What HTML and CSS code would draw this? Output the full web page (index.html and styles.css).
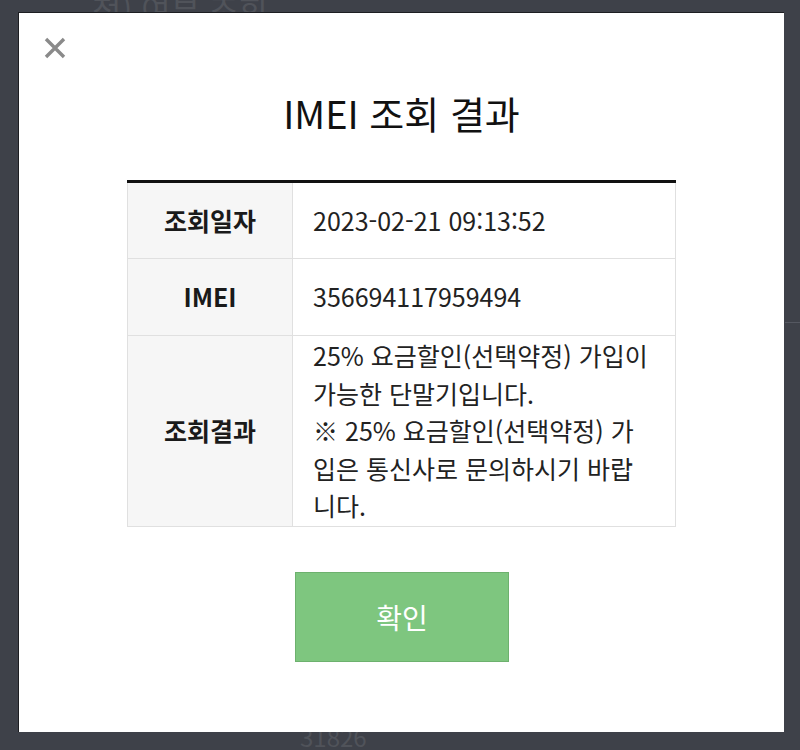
FILE: index.html
```html
<!DOCTYPE html>
<html lang="ko">
<head>
<meta charset="utf-8">
<title>IMEI 조회 결과</title>
<link rel="stylesheet" href="styles.css">
</head>
<body>
<div class="page">
  <div class="page-title">청) 여부 조회</div>
  <div class="page-side"></div>
  <div class="page-foot">31826</div>
</div>
<div class="modal">
  <button class="close" aria-label="닫기">
    <svg width="22" height="22" viewBox="0 0 22 22"><path d="M2 2 L20 20 M20 2 L2 20" stroke="#8a8a8a" stroke-width="3.4" stroke-linecap="butt"/></svg>
  </button>
  <h1 class="title">IMEI 조회 결과</h1>
  <table class="result">
    <tr>
      <th>조회일자</th>
      <td>2023-02-21 09:13:52</td>
    </tr>
    <tr>
      <th>IMEI</th>
      <td>356694117959494</td>
    </tr>
    <tr>
      <th>조회결과</th>
      <td>25% 요금할인(선택약정) 가입이 가능한 단말기입니다.<br>※ 25% 요금할인(선택약정) 가입은 통신사로 문의하시기 바랍니다.</td>
    </tr>
  </table>
  <div class="actions">
    <button class="ok">확인</button>
  </div>
</div>
</body>
</html>
```
FILE: styles.css
```css
html, body {
  margin: 0;
  padding: 0;
}
body {
  width: 800px;
  height: 750px;
  overflow: hidden;
  background: #3e4149;
  font-family: "Noto Sans CJK KR", "Noto Sans", sans-serif;
  color: #222;
  position: relative;
}
.page {
  display: flow-root;
  height: 750px;
  position: relative;
}
.page-title {
  padding: 0 0 0 92px;
  margin-top: -12px;
  font-size: 32px;
  line-height: 40px;
  color: #50535a;
}
.page-side {
  position: absolute;
  right: 0;
  top: 322px;
  width: 15px;
  height: 1px;
  background: #555861;
}
.page-foot {
  position: absolute;
  left: 300px;
  top: 722px;
  font-size: 24px;
  line-height: 30px;
  color: #50535a;
}
.modal {
  position: absolute;
  left: 18px;
  top: 12px;
  width: 766px;
  height: 720px;
  background: #fff;
  border-left: 1px solid #1d1e22;
  border-top: 1px solid #1d1e22;
  box-sizing: border-box;
}
.close {
  position: absolute;
  left: 25px;
  top: 24px;
  width: 22px;
  height: 22px;
  padding: 0;
  border: 0;
  background: none;
  display: block;
}
.close svg {
  display: block;
}
.title {
  margin: 72px 0 0;
  text-align: center;
  font-size: 38px;
  font-weight: 400;
  line-height: 56px;
  color: #111;
}
.result {
  margin: 39px 0 0 108px;
  width: 549px;
  border-collapse: collapse;
  border-top: 3px solid #111;
  font-size: 25px;
  line-height: 37.5px;
}
.result tr {
  height: 77px;
}
.result th {
  width: 164px;
  background: #f6f6f6;
  font-weight: 700;
  color: #1a1a1a;
  border: 1px solid #e0e0e0;
  padding: 0;
  text-align: center;
  vertical-align: middle;
}
.result td {
  border: 1px solid #e0e0e0;
  padding: 1px 27px 1px 20px;
  vertical-align: middle;
  word-break: break-all;
  color: #222;
}
.actions {
  display: flex;
  justify-content: center;
  margin-top: 45px;
}
.ok {
  width: 214px;
  height: 90px;
  background: #7ec67f;
  border: 1px solid #6db16e;
  color: #fff;
  font-family: "Noto Sans CJK KR", "Noto Sans", sans-serif;
  font-size: 28px;
  padding: 0;
  margin-left: 1px;
}
```
